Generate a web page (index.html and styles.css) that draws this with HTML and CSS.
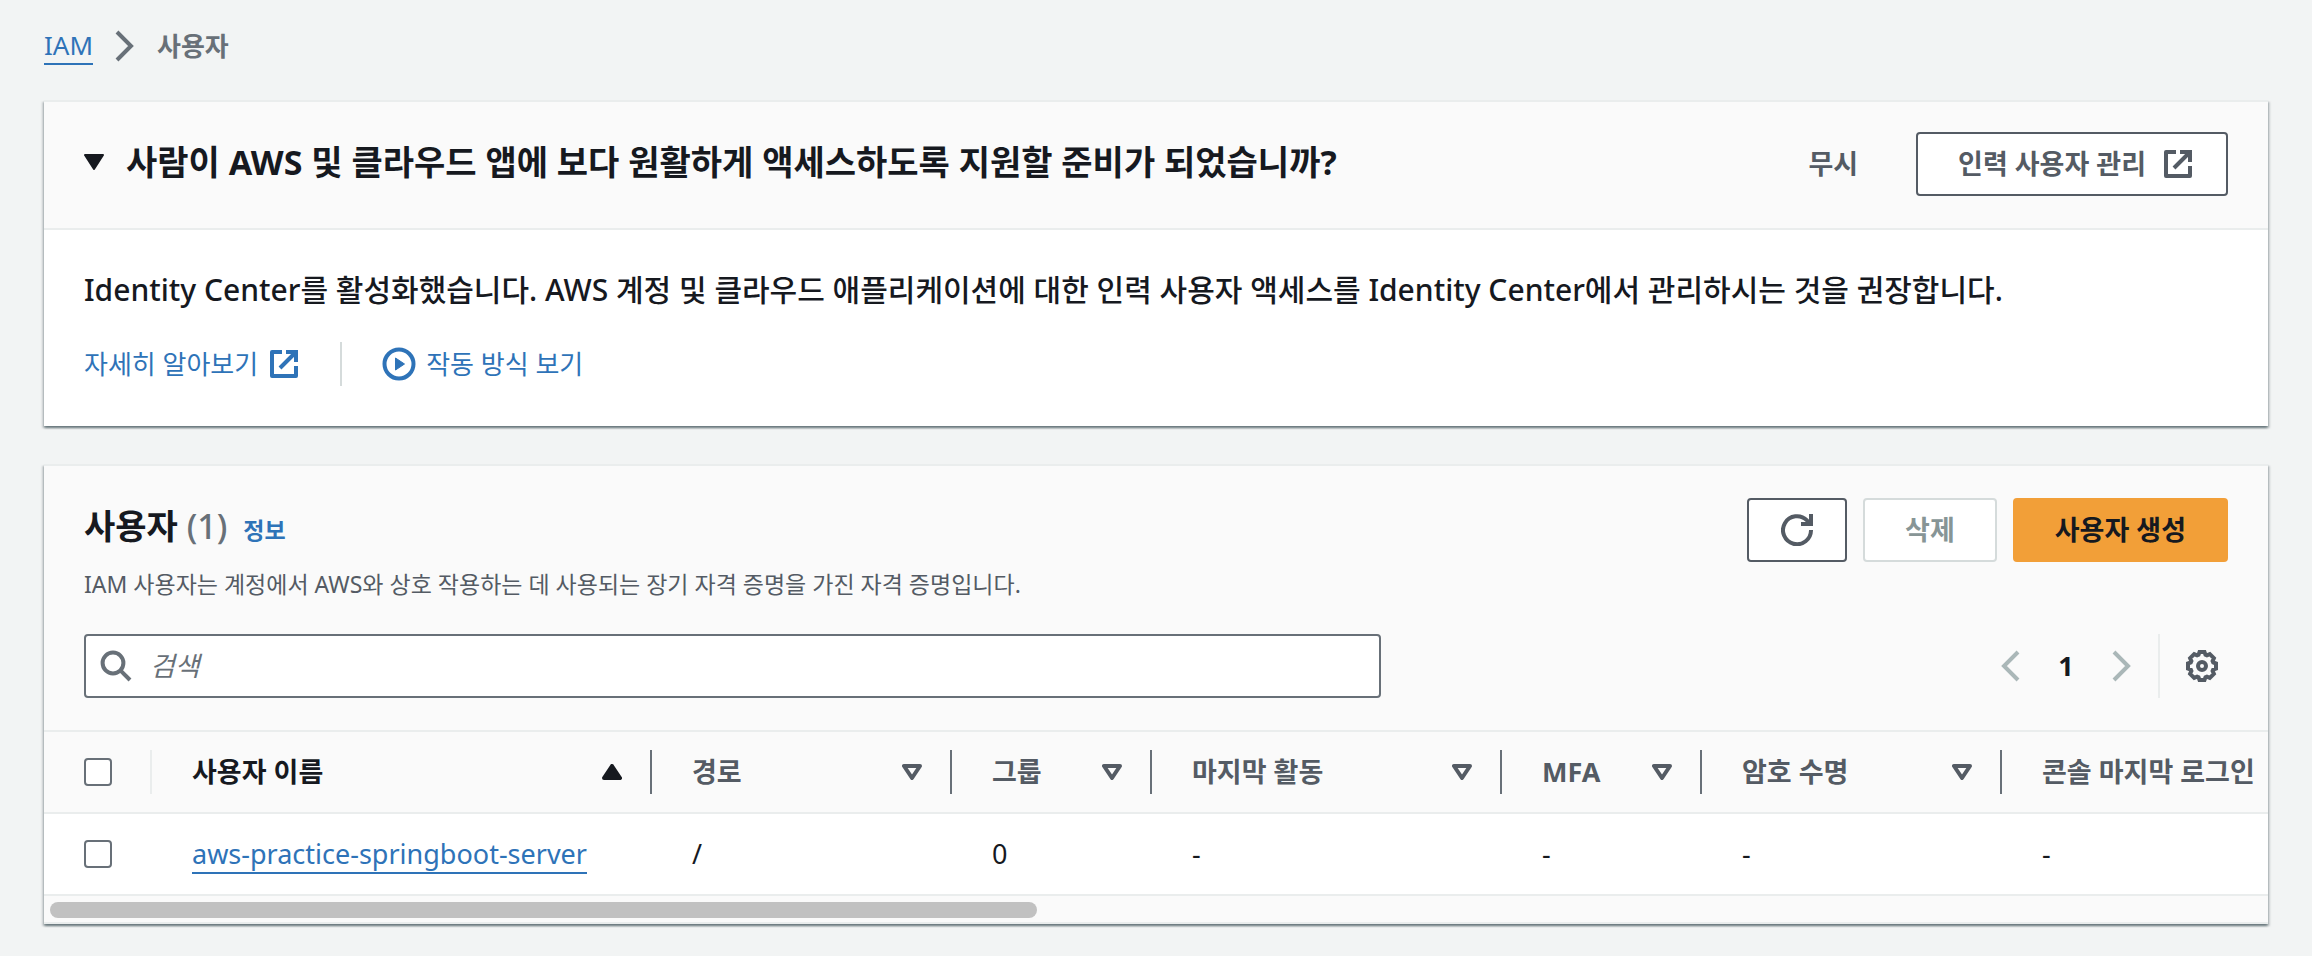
FILE: index.html
```html
<!DOCTYPE html>
<html lang="ko">
<head>
  <meta charset="UTF-8">
  <meta name="viewport" content="width=device-width, initial-scale=1.0">
  <title>IAM - 사용자</title>
  <link rel="stylesheet" href="styles.css">
</head>
<body>

<!-- Icons used more than once -->
<svg class="sprite" aria-hidden="true">
  <symbol id="external" viewBox="0 0 16 16">
    <path d="M7 2H2v12h12V9M9 2h5v5M6 10l8-8" fill="none" stroke="currentColor" stroke-width="2" stroke-linejoin="round"/>
    <path d="M10 1h5v5z" fill="currentColor"/>
  </symbol>
  <symbol id="next" viewBox="0 0 16 16">
    <path d="M4 1l7 7-7 7" fill="none" stroke="currentColor" stroke-width="2"/>
  </symbol>
  <symbol id="prev" viewBox="0 0 16 16">
    <path d="M12 1L5 8l7 7" fill="none" stroke="currentColor" stroke-width="2"/>
  </symbol>
  <symbol id="sort" viewBox="0 0 20 16">
    <path d="M2 2h16l-8 12z" fill="none" stroke="currentColor" stroke-width="4" stroke-linejoin="round"/>
  </symbol>
</svg>

<!-- Breadcrumb -->
<nav class="breadcrumb" aria-label="이동 경로">
  <a href="#" class="link">IAM</a>
  <svg class="icon"><use href="#next"/></svg>
  <span class="current">사용자</span>
</nav>

<main>
  <!-- Identity Center banner -->
  <section class="card">
    <div class="banner-header">
      <button class="toggle" aria-label="접기">
        <svg viewBox="0 0 20 16"><path d="M1 1h18l-9 14z" fill="currentColor" stroke="currentColor" stroke-width="2" stroke-linejoin="round"/></svg>
      </button>
      <h2>사람이 AWS 및 클라우드 앱에 보다 원활하게 액세스하도록 지원할 준비가 되었습니까?</h2>
      <button class="btn btn-plain">무시</button>
      <button class="btn btn-external">인력 사용자 관리 <svg class="icon"><use href="#external"/></svg></button>
    </div>
    <div class="banner-body">
      <p>Identity Center를 활성화했습니다. AWS 계정 및 클라우드 애플리케이션에 대한 인력 사용자 액세스를 Identity Center에서 관리하시는 것을 권장합니다.</p>
      <div class="banner-links">
        <a href="#">자세히 알아보기 <svg class="icon"><use href="#external"/></svg></a>
        <a href="#" class="how">
          <svg class="play" viewBox="0 0 34 34"><circle cx="17" cy="17" r="14.5" fill="none" stroke="currentColor" stroke-width="4"/><path d="M13.5 11l9 6-9 6z" fill="currentColor" stroke="currentColor" stroke-width="1" stroke-linejoin="round"/></svg>
          작동 방식 보기
        </a>
      </div>
    </div>
  </section>

  <!-- Users table -->
  <section class="card">
    <div class="users-header">
      <div class="title-row">
        <div class="title">
          <h2>사용자 <span class="count">(1)</span></h2>
          <a href="#" class="info">정보</a>
        </div>
        <div class="actions">
          <button class="btn btn-icon" aria-label="새로 고침">
            <svg class="icon" viewBox="0 0 16 16"><path d="M15 8A7 7 0 1 1 13 3.2L15 5M15 0v6M10 5h6" fill="none" stroke="currentColor" stroke-width="2"/></svg>
          </button>
          <button class="btn" disabled>삭제</button>
          <button class="btn btn-primary">사용자 생성</button>
        </div>
      </div>
      <p class="description">IAM 사용자는 계정에서 AWS와 상호 작용하는 데 사용되는 장기 자격 증명을 가진 자격 증명입니다.</p>
      <div class="tools">
        <label class="search">
          <svg class="icon" viewBox="0 0 16 16"><circle cx="6.5" cy="6.5" r="5.2" fill="none" stroke="currentColor" stroke-width="2"/><path d="M10.3 10.3l4.7 4.7" stroke="currentColor" stroke-width="2"/></svg>
          <input type="text" placeholder="검색" aria-label="검색">
        </label>
        <div class="pagination">
          <button class="page-btn" disabled aria-label="이전 페이지"><svg class="icon"><use href="#prev"/></svg></button>
          <button class="page-btn page-number">1</button>
          <button class="page-btn" disabled aria-label="다음 페이지"><svg class="icon"><use href="#next"/></svg></button>
          <button class="page-btn settings" aria-label="기본 설정">
            <svg class="icon" viewBox="0 0 32 32"><path d="M13.5 2h5l1 2.8 1.4.6 2.9-1.3 4.1 4.1-1.3 2.9.6 1.4 2.8 1v5l-2.8 1-.6 1.4 1.3 2.9-4.1 4.1-2.9-1.3-1.4.6-1 2.8h-5l-1-2.8-1.4-.6-2.9 1.3-4.1-4.1 1.3-2.9-.6-1.4-2.8-1v-5l2.8-1 .6-1.4-1.3-2.9 4.1-4.1 2.9 1.3 1.4-.6z" fill="none" stroke="currentColor" stroke-width="4"/><circle cx="16" cy="16" r="4" fill="none" stroke="currentColor" stroke-width="4"/></svg>
          </button>
        </div>
      </div>
    </div>

    <div class="table-wrap">
      <table>
        <colgroup>
          <col class="col-check">
          <col class="col-name">
          <col class="col-path">
          <col class="col-group">
          <col class="col-active">
          <col class="col-group">
          <col class="col-path">
          <col>
        </colgroup>
        <thead>
          <tr>
            <th><input type="checkbox" aria-label="모두 선택"></th>
            <th class="sorted"><div>사용자 이름 <svg class="caret" viewBox="0 0 20 16"><path d="M10 2l8 12H2z" fill="currentColor" stroke="currentColor" stroke-width="4" stroke-linejoin="round"/></svg></div></th>
            <th><div>경로 <svg class="caret"><use href="#sort"/></svg></div></th>
            <th><div>그룹 <svg class="caret"><use href="#sort"/></svg></div></th>
            <th><div>마지막 활동 <svg class="caret"><use href="#sort"/></svg></div></th>
            <th><div>MFA <svg class="caret"><use href="#sort"/></svg></div></th>
            <th><div>암호 수명 <svg class="caret"><use href="#sort"/></svg></div></th>
            <th>콘솔 마지막 로그인</th>
          </tr>
        </thead>
        <tbody>
          <tr>
            <td><input type="checkbox" aria-label="aws-practice-springboot-server 선택"></td>
            <td><a href="#" class="link">aws-practice-springboot-server</a></td>
            <td>/</td>
            <td>0</td>
            <td>-</td>
            <td>-</td>
            <td>-</td>
            <td>-</td>
          </tr>
        </tbody>
      </table>
    </div>
    <div class="scrollbar"><div class="thumb"></div></div>
  </section>
</main>

</body>
</html>
```
FILE: styles.css
```css
* {
  box-sizing: border-box;
}
body {
  margin: 0;
  padding: 24px 44px;
  background: #f2f4f4;
  color: #16191f;
  font-family: "Noto Sans", "Noto Sans CJK KR", sans-serif;
  font-size: 27px;
  line-height: 44px;
}
h2, p {
  margin: 0;
}
a {
  color: #2e73b8;
  text-decoration: none;
}
button, input {
  font: inherit;
  color: inherit;
}
.sprite {
  position: absolute;
  width: 0;
  height: 0;
}
.icon {
  width: 32px;
  height: 32px;
  flex: none;
}
.link {
  line-height: 36px;
  border-bottom: 2px solid #2e73b8;
}

/* Breadcrumb */
.breadcrumb {
  display: flex;
  align-items: center;
  gap: 16px;
  height: 44px;
  margin-bottom: 32px;
  color: #687078;
  font-size: 26px;
}
.current {
  font-weight: 700;
}

/* Cards */
.card {
  background: #fff;
  border-top: 2px solid #eaeded;
  box-shadow: 0 2px 2px 0 rgba(0, 28, 36, .4), 2px 2px 2px 0 rgba(0, 28, 36, .15), -2px 2px 2px 0 rgba(0, 28, 36, .15);
}
.card + .card {
  margin-top: 38px;
}
.card h2 {
  font-size: 34px;
  font-weight: 700;
}
.banner-header {
  display: flex;
  align-items: center;
  padding: 30px 40px 32px;
  background: #fafafa;
  border-bottom: 2px solid #eaeded;
}
.banner-header h2 {
  flex: 1;
  padding-bottom: 4px;
}
.toggle {
  display: flex;
  padding: 0 0 4px;
  margin-right: 22px;
  background: none;
  border: none;
}
.toggle svg, .caret {
  width: 20px;
  height: 16px;
}
.banner-body {
  padding: 38px 40px 40px;
}
.banner-body p {
  font-size: 30px;
  font-weight: 500;
}
.banner-links {
  display: flex;
  margin-top: 30px;
  font-size: 26px;
}
.banner-links a {
  display: flex;
  align-items: center;
  gap: 10px;
}
.banner-links .how {
  margin-left: 40px;
  padding-left: 40px;
  border-left: 2px solid #d5dbdb;
}
.play {
  width: 34px;
  height: 34px;
}

/* Buttons */
.btn {
  display: flex;
  align-items: center;
  justify-content: center;
  gap: 16px;
  height: 64px;
  padding: 0 40px;
  background: #fff;
  border: 2px solid #545b64;
  border-radius: 4px;
  color: #545b64;
  font-weight: 700;
}
.btn:disabled {
  border-color: #d5dbdb;
  color: #879596;
}
.btn-plain {
  margin-right: 16px;
  background: none;
  border-color: transparent;
}
.btn-external {
  padding-right: 32px;
}
.btn-icon {
  padding: 0 32px;
}
.btn-primary {
  background: #f29f38;
  border-color: #f29f38;
  color: #16191f;
}

/* Users header */
.users-header {
  padding: 32px 40px;
  background: #fafafa;
}
.title-row, .title, .actions, .tools, .pagination {
  display: flex;
  align-items: center;
}
.title-row, .tools {
  justify-content: space-between;
}
.title {
  align-items: baseline;
  gap: 16px;
  padding-bottom: 4px;
}
.card .count {
  color: #687078;
  font-weight: 500;
}
.info {
  font-size: 23px;
  font-weight: 700;
}
.actions {
  gap: 16px;
}
.description {
  margin: 4px 0 32px;
  font-size: 23px;
  line-height: 36px;
  color: #545b64;
}
.search {
  display: flex;
  align-items: center;
  gap: 18px;
  width: 60.5%;
  height: 64px;
  padding: 0 14px;
  background: #fff;
  border: 2px solid #687078;
  border-radius: 4px;
  color: #687078;
}
.search input {
  flex: 1;
  padding: 0;
  border: none;
  outline: none;
  background: none;
}
.search input::placeholder {
  color: #687078;
  font-style: italic;
  opacity: 1;
}
.page-btn {
  display: flex;
  align-items: center;
  justify-content: center;
  height: 64px;
  padding: 0 12px;
  background: none;
  border: none;
  color: #545b64;
}
.page-btn:disabled {
  color: #aab7b8;
}
.page-number {
  width: 56px;
  color: #16191f;
  font-weight: 700;
}
.settings {
  margin-left: 8px;
  padding: 0 10px 0 26px;
  border-left: 2px solid #eaeded;
}

/* Table */
.table-wrap {
  overflow: hidden;
}
table {
  width: 100%;
  table-layout: fixed;
  border-spacing: 0;
}
.col-check {
  width: 108px;
}
.col-name {
  width: 500px;
}
.col-path {
  width: 300px;
}
.col-group {
  width: 200px;
}
.col-active {
  width: 350px;
}
th, td {
  height: 82px;
  padding: 0 0 0 40px;
  border-top: 2px solid #eaeded;
  text-align: left;
  white-space: nowrap;
}
th {
  color: #545b64;
  font-weight: 700;
  background: linear-gradient(#687078, #687078) right center / 2px 44px no-repeat #fafafa;
}
th:first-child {
  background-image: linear-gradient(#eaeded, #eaeded);
}
th:last-child {
  background-image: none;
}
th div {
  display: flex;
  align-items: center;
  justify-content: space-between;
  padding-right: 30px;
}
.sorted {
  color: #16191f;
}
input[type="checkbox"] {
  display: block;
  appearance: none;
  width: 28px;
  height: 28px;
  margin: 0;
  background: #fff;
  border: 2px solid #687078;
  border-radius: 4px;
}
.scrollbar {
  padding: 6px 6px 4px;
  background: #fafafa;
  border-top: 2px solid #eaeded;
  border-bottom: 2px solid #eaeded;
}
.thumb {
  width: 44.6%;
  height: 16px;
  border-radius: 8px;
  background: #c1c1c1;
}
```
